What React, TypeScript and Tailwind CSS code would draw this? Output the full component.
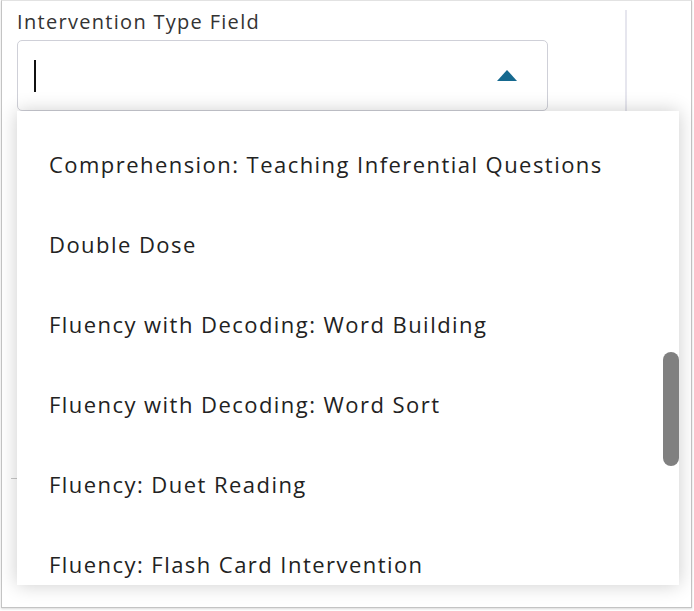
const options = [
    "Comprehension: Teaching Inferential Questions",
    "Double Dose",
    "Fluency with Decoding: Word Building",
    "Fluency with Decoding: Word Sort",
    "Fluency: Duet Reading",
    "Fluency: Flash Card Intervention",
];

const App = () => {
    return (
        <div className="w-[694px] h-[611px] bg-white overflow-hidden font-['Open_Sans',sans-serif] text-[#222]">
            <div className="relative ml-[1px] w-[691px] h-[608px] border border-[#c4c4c4] border-t-[#e2e2e2] bg-white shadow-[0_1px_2px_rgba(0,0,0,0.15)]">
                <div className="flex">
                    <div className="w-[608px] pl-[15px] pt-[7px]">
                        <label className="block text-[20px] leading-[27px] tracking-[1.3px] text-[#333]">
                            Intervention Type Field
                        </label>
                        <div className="mt-[5px] w-[531px] h-[71px] rounded-[5px] border-[1.5px] border-[#cfd0d8] bg-white flex items-center justify-between pl-[16px] pr-[30px]">
                            <span className="block w-[1.5px] h-[32px] bg-[#111]"></span>
                            <svg width="20" height="11" viewBox="0 0 20 11">
                                <polygon points="10,0 20,11 0,11" fill="#16698f" />
                            </svg>
                        </div>
                    </div>
                    <div className="mt-[9px] ml-[15px] w-[2px] h-[101px] bg-[#e6e6ee]"></div>
                </div>

                <div className="absolute left-[9px] top-[477px] w-[8px] h-[1px] bg-[#c8c8c8]"></div>

                <div className="absolute left-[15px] top-[110px] w-[662px] h-[474px] bg-white shadow-[0_0_18px_rgba(0,0,0,0.2)] overflow-hidden">
                    <ul className="pt-[13px]">
                        {options.map((item) => (
                            <li
                                key={item}
                                className="h-[80px] flex items-center pl-[32px] text-[22px] tracking-[1.45px]"
                            >
                                {item}
                            </li>
                        ))}
                    </ul>
                    <div className="absolute right-0 top-[241px] w-[16px] h-[114px] rounded-full bg-[#808080]"></div>
                </div>
            </div>
        </div>
    );
};

export default App;
